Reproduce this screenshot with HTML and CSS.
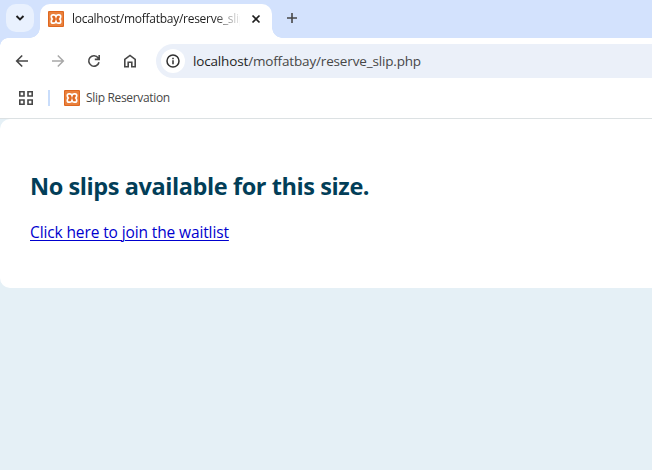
FILE: index.html
```html
<!DOCTYPE html>
<html lang="en">
<head>
<meta charset="utf-8">
<title>Slip Reservation</title>
<link rel="stylesheet" href="styles.css">
</head>
<body>
<svg width="0" height="0" class="defs">
  <symbol id="xampp" viewBox="0 0 16 16">
    <rect width="16" height="16" rx="1" fill="#df671f"/>
    <rect x="1" y="1" width="14" height="14" rx="1" fill="#e9803c"/>
    <path d="M8 5.600Q7.400 3.800 5.800 3.800H5Q3.300 3.800 3.300 5.600Q3.300 7 4.300 8Q3.300 9 3.300 10.400Q3.300 12.200 5 12.200H5.800Q7.400 12.200 8 10.400Q8.600 12.200 10.200 12.200H11Q12.700 12.200 12.700 10.400Q12.700 9 11.700 8Q12.700 7 12.700 5.600Q12.700 3.800 11 3.800H10.200Q8.600 3.800 8 5.600z" fill="#df671f" stroke="#fff" stroke-width="1.700"/>
  </symbol>
</svg>
<header class="tabstrip">
  <button class="search" aria-label="Search tabs"><svg width="10" height="10" viewBox="0 0 10 10"><path d="M1.500 3l3.500 3.500L8.500 3" fill="none" stroke="#1f1f1f" stroke-width="1.900"/></svg></button>
  <div class="tab">
    <svg class="favicon"><use href="#xampp"/></svg>
    <span class="tab-title">localhost/moffatbay/reserve_slip.php</span>
    <svg class="close" width="10" height="10" viewBox="0 0 10 10"><path d="M1.500 1.500l7 7M8.500 1.500l-7 7" stroke="#1f1f1f" stroke-width="1.700"/></svg>
  </div>
  <svg class="new" width="12" height="12" viewBox="0 0 12 12"><path d="M6 1v10M1 6h10" stroke="#474747" stroke-width="1.600"/></svg>
</header>
<nav class="toolbar">
  <svg viewBox="0 0 16 16" fill="none" stroke="#474747" stroke-width="1.600"><path d="M14 8H3M8.200 2.500L2.700 8l5.500 5.500"/></svg>
  <svg viewBox="0 0 16 16" fill="none" stroke="#a8a8a8" stroke-width="1.500"><path d="M2 8h11M7.800 2.500L13.300 8l-5.500 5.500"/></svg>
  <svg viewBox="0 0 16 16" fill="none" stroke="#474747" stroke-width="1.600"><path d="M13 9.200A5.200 5.200 0 1 1 12.200 5L13.200 6.200M13.200 2v4.400H8.800"/></svg>
  <svg viewBox="0 0 16 16" fill="none" stroke="#474747" stroke-width="1.600"><path d="M2.800 6.400L8 2.400l5.200 4v7.400H9.800V9.200H6.200v4.600H2.800z"/></svg>
  <div class="omnibox">
    <span class="info"><svg viewBox="0 0 16 16" fill="none" stroke="#303030" stroke-width="1.500"><circle cx="8" cy="8" r="6"/><path d="M8 7.200v4M8 4.700v1.500"/></svg></span>
    <span class="url"><b>localhost</b>/moffatbay/reserve_slip.php</span>
  </div>
</nav>
<div class="bookmarks">
  <svg class="apps" viewBox="0 0 14 14" fill="none" stroke="#474747" stroke-width="1.600"><path d="M.8.8h4.200v4.200H.8zM9 .8h4.200v4.200H9zM.8 9h4.200v4.200H.8zM9 9h4.200v4.200H9z"/></svg>
  <i class="divider"></i>
  <svg class="favicon"><use href="#xampp"/></svg>
  <span class="bookmark">Slip Reservation</span>
</div>
<main>
  <section class="card">
    <h2>No slips available for this size.</h2>
    <a href="#">Click here to join the waitlist</a>
  </section>
</main>
</body>
</html>
```
FILE: styles.css
```css
* { box-sizing: border-box; }
body { margin: 0; height: 470px; overflow: hidden; background: #e5f0f6; font-family: "Open Sans", sans-serif; }
svg { display: block; flex: none; }
.defs { position: absolute; }
.tabstrip { height: 38px; display: flex; background: #d3e2fd; padding: 4px 0 0 6px; }
.search { width: 28px; height: 28px; border: 0; border-radius: 10px; background: #e9f1fe; padding: 0; display: grid; place-items: center; }
.tab { position: relative; width: 232px; margin-left: 6px; padding: 0 11px 5px 8px; background: #fff; border-radius: 10px 10px 0 0; display: flex; align-items: center; }
.tab::before, .tab::after { content: ""; position: absolute; bottom: 0; width: 10px; height: 10px; }
.tab::before { left: -10px; background: radial-gradient(circle at 0 0, transparent 9.500px, #fff 10px); }
.tab::after { right: -10px; background: radial-gradient(circle at 100% 0, transparent 9.500px, #fff 10px); }
.favicon { width: 16px; height: 16px; }
.tab-title { width: 168px; margin-left: 8px; overflow: hidden; white-space: nowrap; font-size: 12px; line-height: 18px; letter-spacing: -.27px; color: #1f1f1f; mask-image: linear-gradient(90deg, #000 142px, transparent 170px); }
.close { margin-left: auto; }
.new { margin: 8px 0 0 14px; }
.toolbar { height: 46px; display: flex; align-items: center; gap: 20px; padding-left: 14px; background: radial-gradient(circle at 8px 8px, #fff 7.500px, #d3e2fd 8px) 0 0 / 8px 8px no-repeat, #fff; }
.toolbar svg { width: 16px; height: 16px; }
.omnibox { flex: 1; height: 34px; margin-left: -2px; padding-left: 5px; border-radius: 17px 0 0 17px; background: #ebf0f9; display: flex; align-items: center; }
.info { width: 24px; height: 24px; border-radius: 50%; background: #fff; display: grid; place-items: center; }
.url { margin-left: 8px; font-size: 13.500px; letter-spacing: -.16px; color: #474747; white-space: nowrap; }
.url b { font-weight: 400; color: #1f1f1f; }
.bookmarks { height: 35px; background: #fff; border-bottom: 1px solid #dce1e3; display: flex; align-items: center; padding: 0 0 7px 19px; }
.apps { width: 14px; height: 14px; }
.divider { width: 2px; height: 16px; margin: 0 14px 0 15px; background: #c9ddfb; }
.bookmark { margin-left: 6px; font-size: 12px; letter-spacing: -.33px; color: #474747; }
.card { height: 169px; padding: 49px 30px 0; background: #fff; border-radius: 10px 0 0 10px; }
h2 { margin: 0 0 17px; font-size: 23.500px; line-height: 36px; font-weight: 700; letter-spacing: -.41px; color: #023e58; white-space: nowrap; }
.card a { display: inline-block; font-size: 15.500px; line-height: 18px; letter-spacing: -.12px; color: #0000ce; text-decoration-thickness: 1px; text-underline-offset: 2px; text-decoration-skip-ink: auto; }
```
